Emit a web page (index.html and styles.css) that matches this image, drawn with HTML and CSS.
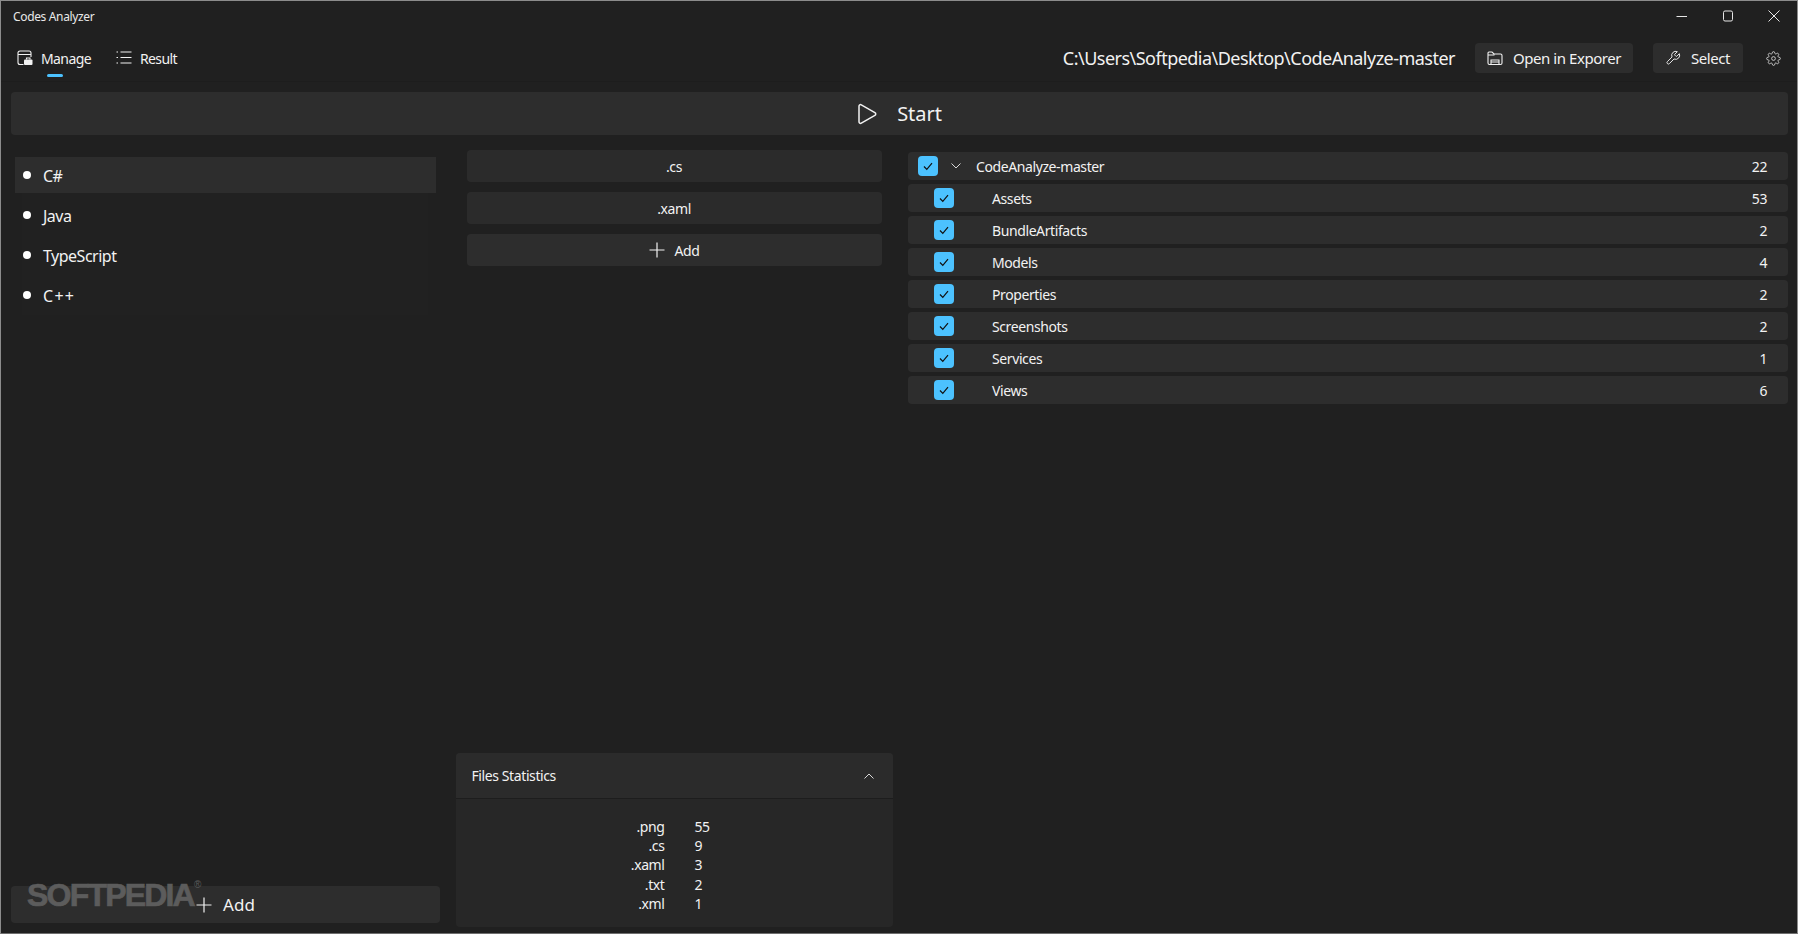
FILE: index.html
```html
<!DOCTYPE html>
<html lang="en">
<head>
<meta charset="utf-8">
<title>Codes Analyzer</title>
<link rel="stylesheet" href="styles.css">
</head>
<body>
<div class="window">
  <header class="titlebar">
    <span class="app-title">Codes Analyzer</span>
    <div class="win-controls">
      <svg class="win-icon" viewBox="0 0 12 12"><path d="M0.5 6.5h10.5"/></svg>
      <svg class="win-icon" viewBox="0 0 12 12"><rect x="1.5" y="1" width="9" height="10" rx="1.5"/></svg>
      <svg class="win-icon" viewBox="0 0 12 12"><path d="M0.5 0.5l11 11M11.5 0.5l-11 11"/></svg>
    </div>
  </header>
  <nav class="navbar">
    <div class="tabs">
      <div class="tab tab-active">
        <svg class="icon" viewBox="0 0 16 16"><path d="M6.5 14.5H3a2 2 0 0 1-2-2V3a2 2 0 0 1 2-2h9a2 2 0 0 1 2 2v4M1 4.500h13"/><rect class="solid" x="7" y="9.500" width="8.500" height="5.500" rx="1"/><path d="M9.500 9.500V8h3.500v1.500"/></svg>
        <span>Manage</span>
        <i class="tab-marker"></i>
      </div>
      <div class="tab">
        <svg class="icon" viewBox="0 0 16 16"><path d="M4.500 2h11M4.500 7.500h11M4.500 13h11M0.500 2h1.500M0.500 7.500h1.500M0.500 13h1.500"/></svg>
        <span>Result</span>
      </div>
    </div>
    <div class="nav-actions">
      <span class="path">C:\Users\Softpedia\Desktop\CodeAnalyze-master</span>
      <button class="action action-open">
        <svg class="icon" viewBox="0 0 16 16"><path d="M1 5V3a1 1 0 0 1 1-1h3l2 2h6.500a1.500 1.500 0 0 1 1.500 1.500V13a1.500 1.500 0 0 1-1.500 1.500h-11A1.500 1.500 0 0 1 1 13V5h6.500"/><path d="M4 14.500v-4.500h8v4.500M4 12h8"/></svg>
        <span>Open in Exporer</span>
      </button>
      <button class="action action-select">
        <svg class="icon" viewBox="0 0 24 24"><path class="thin" d="M14.700 6.300a1 1 0 0 0 0 1.400l1.600 1.600a1 1 0 0 0 1.400 0l3.770-3.770a6 6 0 0 1-7.940 7.940l-6.910 6.910a2.120 2.120 0 0 1-3-3l6.910-6.910a6 6 0 0 1 7.940-7.940l-3.760 3.760z"/></svg>
        <span>Select</span>
      </button>
      <svg class="icon gear" viewBox="0 0 24 24"><circle class="thin" cx="12" cy="12" r="3"/><path class="thin" d="M19.400 15a1.650 1.650 0 0 0 .33 1.820l.06.06a2 2 0 0 1 0 2.830 2 2 0 0 1-2.830 0l-.06-.06a1.650 1.650 0 0 0-1.820-.33 1.650 1.650 0 0 0-1 1.510V21a2 2 0 0 1-2 2 2 2 0 0 1-2-2v-.09A1.650 1.650 0 0 0 9 19.400a1.650 1.650 0 0 0-1.820.33l-.06.06a2 2 0 0 1-2.830 0 2 2 0 0 1 0-2.830l.06-.06a1.650 1.650 0 0 0 .33-1.820 1.650 1.650 0 0 0-1.510-1H3a2 2 0 0 1-2-2 2 2 0 0 1 2-2h.09A1.650 1.650 0 0 0 4.600 9a1.650 1.650 0 0 0-.33-1.820l-.06-.06a2 2 0 0 1 0-2.830 2 2 0 0 1 2.830 0l.06.06a1.650 1.650 0 0 0 1.820.33H9a1.650 1.650 0 0 0 1-1.510V3a2 2 0 0 1 2-2 2 2 0 0 1 2 2v.09a1.650 1.650 0 0 0 1 1.510 1.650 1.650 0 0 0 1.820-.33l.06-.06a2 2 0 0 1 2.830 0 2 2 0 0 1 0 2.830l-.06.06a1.650 1.650 0 0 0-.33 1.820V9a1.650 1.650 0 0 0 1.510 1H21a2 2 0 0 1 2 2 2 2 0 0 1-2 2h-.09a1.650 1.650 0 0 0-1.510 1z"/></svg>
    </div>
  </nav>
  <button class="start-bar">
    <svg class="play" viewBox="0 0 20 22"><path d="M2 3.200c0-1.300 1.200-2 2.300-1.400l13.600 7.800c1.100.6 1.100 2.200 0 2.800L4.300 20.200C3.200 20.800 2 20.100 2 18.800z"/></svg>
    <span>Start</span>
  </button>
  <main class="content">
    <section class="col-languages">
      <ul class="lang-list">
        <li class="lang lang-selected"><i class="dot"></i><span>C#</span></li>
        <li class="lang"><i class="dot"></i><span>Java</span></li>
        <li class="lang"><i class="dot"></i><span>TypeScript</span></li>
        <li class="lang lang-wide"><i class="dot"></i><span>C++</span></li>
      </ul>
      <button class="add-lang">
        <svg class="plus" viewBox="0 0 16 16"><path d="M8 0.500v15M0.500 8h15"/></svg>
        <span>Add</span>
      </button>
    </section>
    <section class="col-ext">
      <div class="ext-list">
        <button class="ext">.cs</button>
        <button class="ext">.xaml</button>
        <button class="ext ext-add">
          <svg class="plus plus-small" viewBox="0 0 16 16"><path d="M8 0.500v15M0.500 8h15"/></svg>
          <span>Add</span>
        </button>
      </div>
      <div class="stats">
        <div class="stats-head">
          <span>Files Statistics</span>
          <svg class="chev" viewBox="0 0 10 6"><path d="M0.500 5.500L5 1l4.500 4.500"/></svg>
        </div>
        <dl class="stats-body">
          <dt>.png</dt><dd>55</dd>
          <dt>.cs</dt><dd>9</dd>
          <dt>.xaml</dt><dd>3</dd>
          <dt>.txt</dt><dd>2</dd>
          <dt>.xml</dt><dd>1</dd>
        </dl>
      </div>
    </section>
    <section class="col-tree">
      <div class="node node-root">
        <span class="check"><svg viewBox="0 0 12 12"><path d="M2 6.500l2.800 2.800L10 3.200"/></svg></span>
        <svg class="chev chev-down" viewBox="0 0 10 6"><path d="M0.500 0.500L5 5l4.500-4.500"/></svg>
        <span class="node-name">CodeAnalyze-master</span><span class="count">22</span>
      </div>
      <div class="node">
        <span class="check"><svg viewBox="0 0 12 12"><path d="M2 6.500l2.800 2.800L10 3.200"/></svg></span>
        <span class="node-name">Assets</span><span class="count">53</span>
      </div>
      <div class="node">
        <span class="check"><svg viewBox="0 0 12 12"><path d="M2 6.500l2.800 2.800L10 3.200"/></svg></span>
        <span class="node-name">BundleArtifacts</span><span class="count">2</span>
      </div>
      <div class="node">
        <span class="check"><svg viewBox="0 0 12 12"><path d="M2 6.500l2.800 2.800L10 3.200"/></svg></span>
        <span class="node-name">Models</span><span class="count">4</span>
      </div>
      <div class="node">
        <span class="check"><svg viewBox="0 0 12 12"><path d="M2 6.500l2.800 2.800L10 3.200"/></svg></span>
        <span class="node-name">Properties</span><span class="count">2</span>
      </div>
      <div class="node">
        <span class="check"><svg viewBox="0 0 12 12"><path d="M2 6.500l2.800 2.800L10 3.200"/></svg></span>
        <span class="node-name">Screenshots</span><span class="count">2</span>
      </div>
      <div class="node">
        <span class="check"><svg viewBox="0 0 12 12"><path d="M2 6.500l2.800 2.800L10 3.200"/></svg></span>
        <span class="node-name">Services</span><span class="count">1</span>
      </div>
      <div class="node">
        <span class="check"><svg viewBox="0 0 12 12"><path d="M2 6.500l2.800 2.800L10 3.200"/></svg></span>
        <span class="node-name">Views</span><span class="count">6</span>
      </div>
    </section>
  </main>
  <div class="watermark">SOFTPEDIA<sup>®</sup></div>
</div>
</body>
</html>
```
FILE: styles.css
```css
* { box-sizing: border-box; }
html, body { margin: 0; padding: 0; background: #202020; }
body { font-family: "Noto Sans", "Open Sans", sans-serif; color: #f2f2f2; overflow: hidden; }
button { font: inherit; color: inherit; border: 0; padding: 0; cursor: default; }
ul, dl, dd { margin: 0; padding: 0; list-style: none; }
svg { display: block; fill: none; stroke: currentColor; }

.window {
  position: relative;
  width: 1798px;
  height: 934px;
  display: flex;
  flex-direction: column;
  background: #202020;
  border: 1px solid #8c8c8c;
  border-bottom-color: #6e6e6e;
}

/* title bar */
.titlebar { height: 30px; flex: none; display: flex; align-items: center; justify-content: space-between; padding: 0 17px 0 12px; }
.app-title { font-size: 12px; letter-spacing: -0.35px; color: #e8e8e8; }
.win-controls { display: flex; gap: 34px; align-items: center; }
.win-icon { width: 12px; height: 12px; stroke-width: 1; color: #e6e6e6; }

/* nav */
.navbar { height: 51px; flex: none; display: flex; align-items: center; justify-content: space-between; border-bottom: 1px solid #1d1d1d; padding: 4px 16px 0 16px; }
.tabs { display: flex; gap: 25px; }
.tab { position: relative; display: flex; align-items: center; gap: 8px; font-size: 14px; letter-spacing: -0.6px; }
.tab-marker { position: absolute; left: 30px; top: 25px; width: 16px; height: 3px; border-radius: 2px; background: #4cc2ff; }
.icon { width: 16px; height: 16px; stroke-width: 1.100; flex: none; }
.icon .thin { stroke-width: 1.400; }
.icon .solid { fill: #f2f2f2; stroke: none; }
.nav-actions { display: flex; align-items: center; }
.path { font-size: 18px; letter-spacing: -0.52px; margin-right: 20px; white-space: nowrap; }
.action { height: 30px; display: flex; align-items: center; gap: 10px; background: #2d2d2d; border-radius: 4px; font-size: 15px; letter-spacing: -0.45px; padding: 0 12px; white-space: nowrap; }
.action-open { width: 158px; margin-right: 20px; }
.action-select { width: 90px; margin-right: 23px; }
.gear { width: 15px; height: 15px; color: #d8d8d8; }

/* start */
.start-bar { flex: none; height: 43px; margin: 10px 9px 0 10px; display: flex; align-items: center; justify-content: center; gap: 20px; background: #2d2d2d; border-radius: 4px; font-size: 20px; letter-spacing: -0.05px; }
.play { width: 20px; height: 22px; stroke-width: 1.500; }

/* columns */
.content { flex: 1; min-height: 0; display: grid; grid-template-columns: 429px 437px 880px; padding: 0 9px 6px 10px; justify-content: space-between; }

.col-languages { display: flex; flex-direction: column; padding-top: 22px; padding-bottom: 4px; }
.lang-list { margin: 0 12px 0 11px; background: #212121; display: flex; flex-direction: column; gap: 4px; padding-bottom: 2px; }
.lang { height: 36px; display: flex; align-items: center; gap: 12px; padding-left: 1px; font-size: 16px; letter-spacing: -0.5px; }
.lang span { padding-top: 2px; }
.lang-selected { margin: 0 -8px 0 -7px; padding-left: 8px; background: #2d2d2d; }
.lang-wide { letter-spacing: 1.300px; }
.dot { width: 8px; height: 8px; border-radius: 50%; background: #fff; }
.add-lang { margin-top: auto; height: 37px; flex: none; display: flex; align-items: center; justify-content: center; gap: 11px; background: #2d2d2d; border-radius: 4px; font-size: 17px; letter-spacing: 0; }
.plus { width: 16px; height: 16px; stroke-width: 1.200; }
.plus-small { width: 16px; height: 16px; }

.col-ext { display: flex; flex-direction: column; padding-top: 15px; }
.ext-list { display: flex; flex-direction: column; gap: 10px; margin: 0 11px; flex: 1; }
.ext { height: 32px; flex: none; background: #2b2b2b; border-radius: 4px; font-size: 14px; letter-spacing: -0.4px; display: flex; align-items: center; justify-content: center; gap: 10px; }
.ext-add { background: #2d2d2d; }
.stats { height: 174px; flex: none; background: #272727; border-radius: 4px; overflow: hidden; }
.stats-head { height: 46px; display: flex; align-items: center; justify-content: space-between; padding: 0 19px 0 16px; background: #2b2b2b; border-bottom: 1px solid #1d1d1d; font-size: 14px; letter-spacing: -0.4px; }
.chev { width: 10px; height: 6px; stroke-width: 1; color: #d8d8d8; }
.stats-body { display: grid; grid-template-columns: 209px 1fr; column-gap: 30px; padding-top: 18px; font-size: 14px; line-height: 19.200px; letter-spacing: -0.4px; }
.stats-body dt { text-align: right; }

.col-tree { display: flex; flex-direction: column; gap: 4px; padding-top: 17px; }
.node { height: 28px; flex: none; display: flex; align-items: center; background: #2d2d2d; border-radius: 4px; padding: 0 21px 0 26px; font-size: 14px; letter-spacing: -0.4px; }
.node-root { padding-left: 10px; }
.check { width: 20px; height: 20px; flex: none; border-radius: 4px; background: #4cc2ff; color: #111; display: flex; align-items: center; justify-content: center; }
.check svg { width: 12px; height: 12px; stroke-width: 1.200; }
.chev-down { margin: 0 0 0 13px; }
.node-name { margin-left: 38px; flex: 1; }
.node-root .node-name { margin-left: 15px; }

.watermark { position: absolute; left: 26px; top: 874px; font-family: "Liberation Sans", sans-serif; font-weight: 700; font-size: 32px; letter-spacing: -1.800px; color: #5c5c5c; -webkit-text-stroke: 0.700px #5c5c5c; line-height: 40px; pointer-events: none; }
.watermark sup { font-size: 10px; letter-spacing: 0; font-weight: 400; vertical-align: 18px; line-height: 0; margin-left: 0; -webkit-text-stroke: 0; }
```
